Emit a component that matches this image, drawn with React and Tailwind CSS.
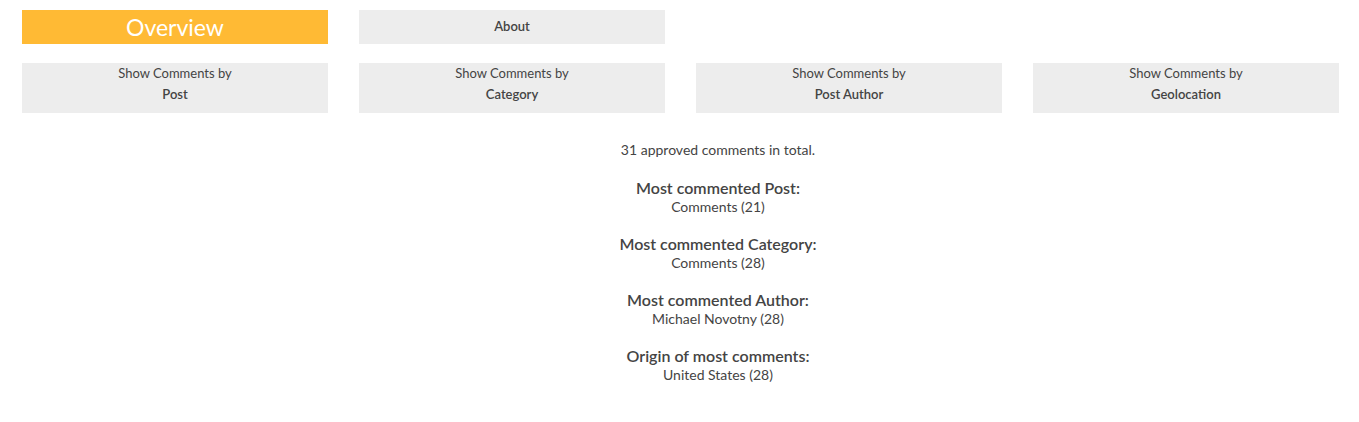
const tabs = ['Post', 'Category', 'Post Author', 'Geolocation'];

const stats = [
  { label: 'Most commented Post:', value: 'Comments (21)' },
  { label: 'Most commented Category:', value: 'Comments (28)' },
  { label: 'Most commented Author:', value: 'Michael Novotny (28)' },
  { label: 'Origin of most comments:', value: 'United States (28)' },
];

export default function App() {
  return (
    <div className="min-h-[422px] bg-white pl-[22px] pr-[20px] pt-[10px] text-[#444] [font-family:Lato,'Noto_Sans',sans-serif]">
      <div className="grid grid-cols-4 gap-x-[31px]">
        <div className="flex h-[34px] items-center justify-center bg-[#ffba34] text-[23px] text-white">Overview</div>
        <div className="flex h-[34px] items-center justify-center bg-[#ededed] text-[13px] font-semibold">About</div>
      </div>
      <div className="mt-[19px] grid grid-cols-4 gap-x-[31px]">
        {tabs.map((t) => (
          <div key={t} className="flex h-[50px] flex-col items-center bg-[#ededed]">
            <span className="text-[13px] leading-[20px]">Show Comments by</span>
            <span className="text-[13px] font-semibold leading-[22px]">{t}</span>
          </div>
        ))}
      </div>
      <div className="ml-[75px] mt-[27px] flex flex-col items-center text-center">
        <p className="text-[14px] leading-[20px]">31 approved comments in total.</p>
        {stats.map((s) => (
          <div key={s.label} className="mt-[18px] flex flex-col items-center">
            <h3 className="text-[16px] font-semibold leading-[20px]">{s.label}</h3>
            <p className="text-[14px] leading-[18px]">{s.value}</p>
          </div>
        ))}
      </div>
    </div>
  );
}
